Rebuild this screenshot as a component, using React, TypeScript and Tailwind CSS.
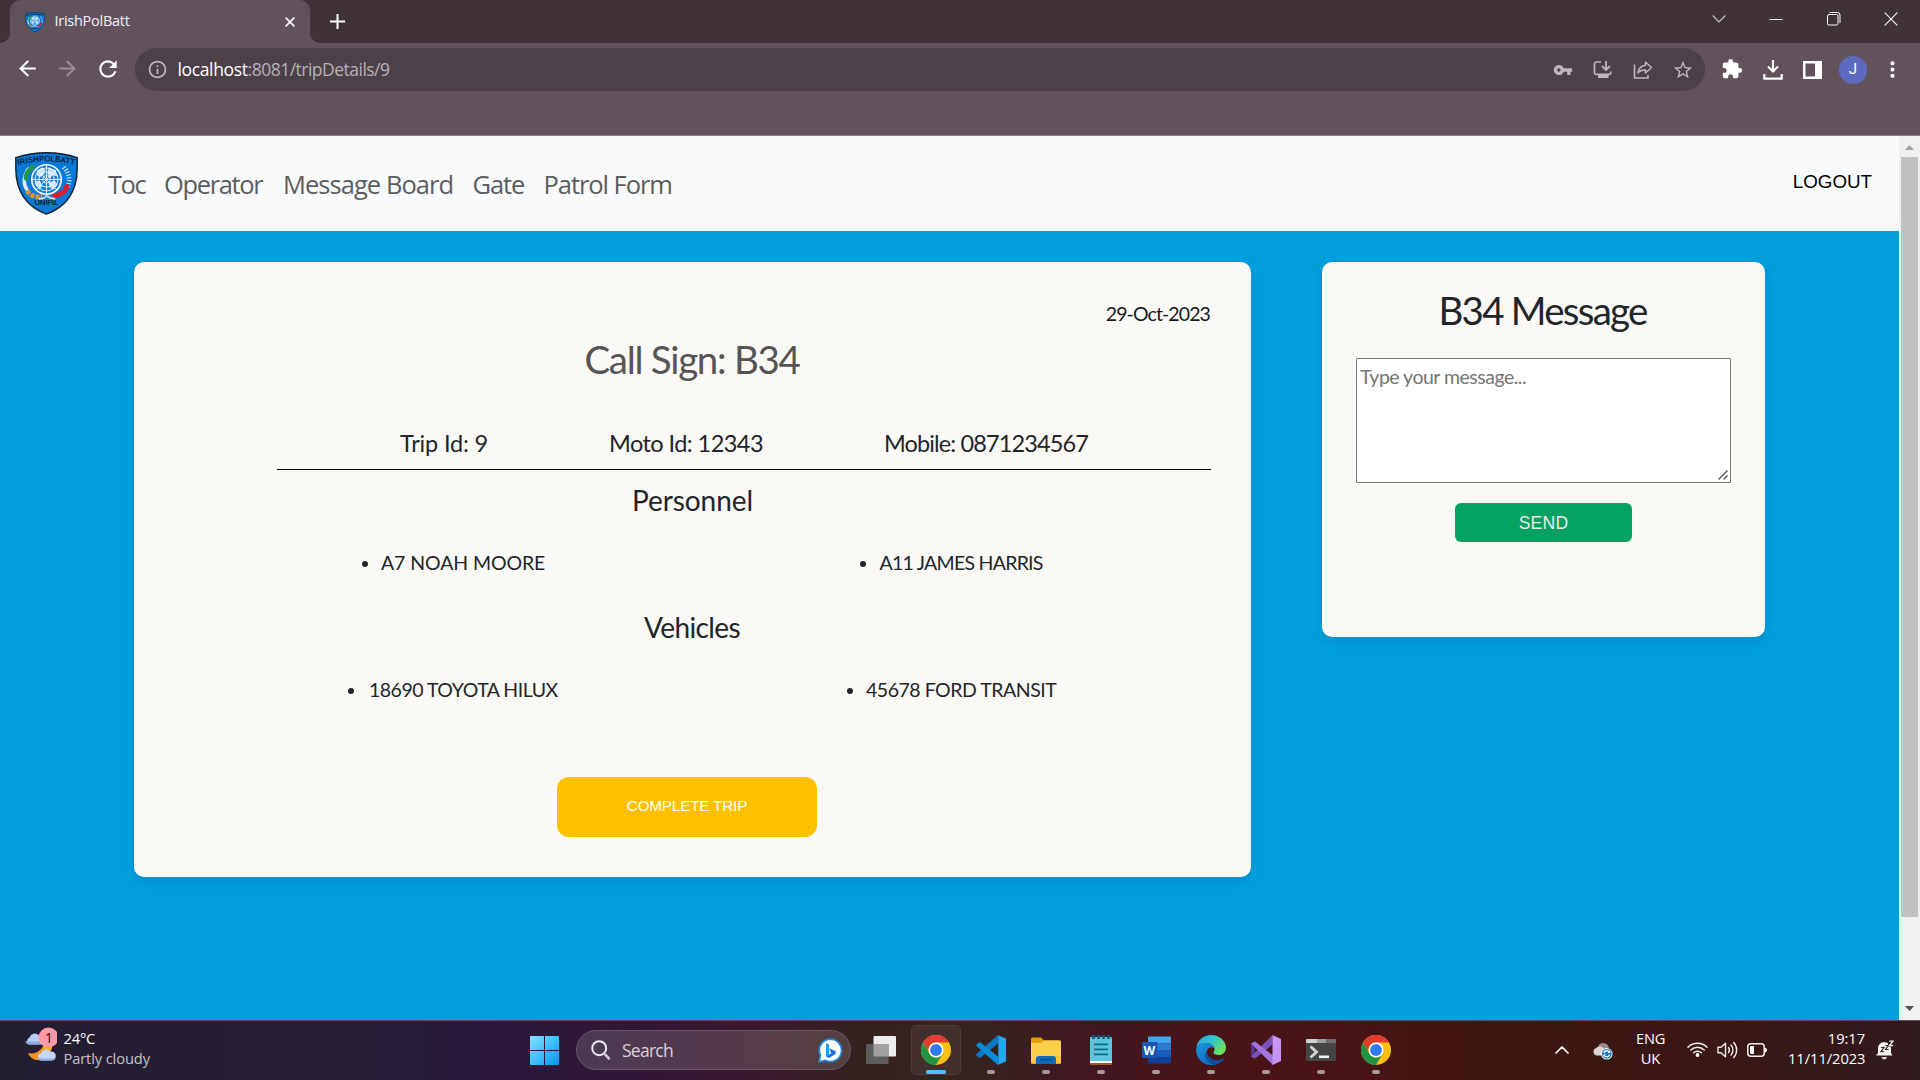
import React from "react";
import {
  MdArrowBack,
  MdArrowForward,
  MdExtension,
  MdMoreVert,
  MdOutlineInfo,
  MdRefresh,
  MdStarOutline,
  MdVpnKey,
} from "react-icons/md";

function Shield({ size, id }: { size: number; id: string }) {
  return (
    <svg width={size} height={size} viewBox="0 0 62 62">
      <path
        d="M.8 5.5Q15 .8 31 .8T61.2 5.5V16C61.2 40 50 54 31 61.2 12 54 .8 40 .8 16Z"
        fill="#0a78d6"
        stroke="#15202c"
        strokeWidth="1.4"
      />
      <g fill="none" strokeLinecap="round">
        <path d="M13 17c-5 8-5 15-1 20" stroke="#dfeefa" strokeWidth="3.6" strokeDasharray="3 1.4" />
        <path d="M17 15c-5 4-7 7-6 11" stroke="#1b9a4b" strokeWidth="4.600" />
        <path d="M48 15c6 7 6 14 4 19" stroke="#dfeefa" strokeWidth="4.600" strokeDasharray="1 1.800" strokeLinecap="butt" />
        <path d="M12 38c3 5 8 7 15 6" stroke="#e3942d" strokeWidth="4.600" strokeDasharray="4 1.200" strokeLinecap="butt" />
        <path d="M51 34c-1 5-6 8-12 9" stroke="#d3222f" strokeWidth="5" />
        <path d="M24 46q5 0 7-3 3 3 8 3" stroke="#c9d8e4" strokeWidth="1.800" />
      </g>
      <circle cx="31" cy="27" r="14.500" fill="#1180da" stroke="#f4faff" strokeWidth="1.600" />
      <g fill="none" stroke="#e9f5ff" strokeWidth=".9">
        <circle cx="31" cy="27" r="11.300" />
        <circle cx="31" cy="27" r="7.500" />
        <circle cx="31" cy="27" r="3.800" />
        <path d="M31 12v30M16 27h30M20.500 16.500l21 21M41.500 16.500l-21 21" />
      </g>
      <path
        d="M22 18l5-3 3 3-2 5-4 2-3-3zM33 15l7 3 2 6-5-1-3 3-2-5zM20 28l5 1 2 5-3 3-4-5zM33 30l6-2 3 4-4 5-4-2z"
        fill="#f4faff"
        opacity=".8"
      />
      <defs>
        <path id={id} d="M3 12.800Q31 5.500 59 12.800" />
      </defs>
      <text fontFamily="Liberation Sans" fontSize="7.600" fill="#0c1420" stroke="#0c1420" strokeWidth=".2" textLength="56">
        <textPath href={`#${id}`} textLength="56">
          IRISHPOLBATT
        </textPath>
      </text>
      <text x="31" y="52.500" textAnchor="middle" fontFamily="Liberation Sans" fontSize="7.400" fill="#0c1420" stroke="#0c1420" strokeWidth=".2">
        UNIFIL
      </text>
    </svg>
  );
}

function ChromeLogo() {
  return (
    <svg width="30" height="30" viewBox="0 0 30 30">
      <circle cx="15" cy="15" r="15" fill="#fbc116" />
      <path d="M15 7.500H28A15 15 0 0 0 2 7.500L8.500 18.750A7.500 7.500 0 0 1 15 7.500Z" fill="#e33b2e" />
      <path d="M2 7.500A15 15 0 0 0 15 30L21.500 18.750A7.500 7.500 0 0 1 8.500 18.750Z" fill="#229342" />
      <circle cx="15" cy="15" r="7.500" fill="#fff" />
      <circle cx="15" cy="15" r="5.900" fill="#2f7bee" />
    </svg>
  );
}

function VsCodeLogo() {
  return (
    <svg width="30" height="30" viewBox="0 0 30 30">
      <path d="M22 0v8.500L4.500 22.500a1.500 1.500 0 0 1-1.800 0L.7 20.700a1.300 1.300 0 0 1 0-1.900Z" fill="#0a79c4" />
      <path d="M22 30v-8.500L4.500 7.500a1.500 1.500 0 0 0-1.800 0L.7 9.300a1.300 1.300 0 0 0 0 1.900Z" fill="#0b8ad8" />
      <path d="M21.500 0 30 3.600v22.800L21.500 30c.6-.3.8-.8.800-1.500v-27c0-.7-.2-1.200-.8-1.500Z" fill="#27a5f1" />
    </svg>
  );
}

function FolderLogo() {
  return (
    <svg width="30" height="30" viewBox="0 0 30 30">
      <path d="M0 4a1.500 1.500 0 0 1 1.500-1.500h8.500l3 3V12H0Z" fill="#e3a008" />
      <path d="M0 8h9.500l4-2.700H28.500A1.500 1.500 0 0 1 30 6.800V27.500a1.300 1.300 0 0 1-1.300 1.300H1.300A1.300 1.300 0 0 1 0 27.500Z" fill="#fecf4b" />
      <path d="M0 26v1.500a1.300 1.300 0 0 0 1.300 1.300h27.400a1.300 1.300 0 0 0 1.300-1.300V20Z" fill="#fbbf24" opacity=".6" />
      <path d="M5 29v-5a3 3 0 0 1 3-3h14a3 3 0 0 1 3 3v5Z" fill="#0f6cbd" />
      <path d="M9 24.700h12" stroke="#0b4a86" strokeWidth="1.500" />
    </svg>
  );
}

function NotepadLogo() {
  return (
    <svg width="30" height="30" viewBox="0 0 30 30">
      <path d="M4 26h22v3.500a.8.800 0 0 1-.8.800H4.800a.8.800 0 0 1-.8-.8Z" fill="#a4561b" />
      <path d="M4 24h22v4H4Z" fill="#f3f3f3" />
      <path d="M4 3a1 1 0 0 1 1-1h20a1 1 0 0 1 1 1v23H4Z" fill="#5cc5de" />
      <path d="M8 9.300h14M8 14.300h14M8 19.300h14" stroke="#0b6a8c" strokeWidth="1.800" />
      <path d="M7.500 0v4M12.500 0v4M17.500 0v4M22.500 0v4" stroke="#0e5f7e" strokeWidth="2.600" />
    </svg>
  );
}

function WordLogo() {
  return (
    <svg width="30" height="30" viewBox="0 0 30 30">
      <path d="M8 1.500h21a1 1 0 0 1 1 1V8.500H7V2.500a1 1 0 0 1 1-1Z" fill="#41a5ee" />
      <path d="M7 8.500h23V15H7Z" fill="#2b7cd3" />
      <path d="M7 15h23v7H7Z" fill="#185abd" />
      <path d="M7 22h23v5.500a1 1 0 0 1-1 1H8a1 1 0 0 1-1-1Z" fill="#103f91" />
      <rect x="1" y="7" width="15.500" height="16" rx="1.200" fill="#1a56b4" />
      <text x="8.400" y="19.500" textAnchor="middle" fontFamily="Open Sans" fontWeight="700" fontSize="12" fill="#fff">
        W
      </text>
    </svg>
  );
}

function EdgeLogo() {
  return (
    <svg width="30" height="30" viewBox="0 0 30 30">
      <defs>
        <linearGradient id="edgeTop" x1="0" y1="0" x2="1" y2=".6">
          <stop offset="0" stopColor="#2aa9e8" />
          <stop offset=".5" stopColor="#2fc4cf" />
          <stop offset="1" stopColor="#6ae35a" />
        </linearGradient>
        <linearGradient id="edgeLow" x1="0" y1="0" x2="1" y2="1">
          <stop offset="0" stopColor="#1a9be0" />
          <stop offset="1" stopColor="#0c55b0" />
        </linearGradient>
      </defs>
      <path d="M.3 12.500C1.500 5 7.600 0 15 0c8.500 0 15 6 15 12.700 0 4.500-3.500 7.300-7.300 7.300-3.200 0-5.200-1.100-5.200-2.400 0-.8 1-1.400 1-3.300C18.500 11 14.500 8 10 8 5 8 1 10.500.3 12.500Z" fill="url(#edgeTop)" />
      <path d="M.2 13.500C1 10 5 8 10 8c4.500 0 8.500 3 8.500 6.300-.2-2.500-5.800-3.300-7.300.7C9.500 21 14 26.500 21 25.700c2.500-.2 4.500-1.500 6-2.300.6-.3 1 .2.600.8C25 28 20 30 15 30 6.500 30-.8 22.500.2 13.500Z" fill="url(#edgeLow)" />
      <path d="M10.500 15.500c-3.500 5 .5 13 8 14 3.500-.5 7-2.500 9-5.300.4-.6 0-1.100-.6-.8-7 4.200-15.500.6-16.400-7.900Z" fill="#0d4f9e" />
    </svg>
  );
}

function VisualStudioLogo() {
  return (
    <svg width="30" height="30" viewBox="0 0 30 30">
      <path d="M0 8.500 4 6.500V23.500L0 21.500Z" fill="#52338a" />
      <path d="M0 21.500 21.500 0v9.500L4 23.500Z" fill="#7a52b8" />
      <path d="M0 8.500 4 6.500 22 20.500V30Z" fill="#a174e0" />
      <path d="M21.500 0 30 4v22l-8.500 4Z" fill="#c795f7" />
    </svg>
  );
}

function TerminalLogo() {
  return (
    <svg width="30" height="30" viewBox="0 0 30 30">
      <rect x="0" y="4" width="30" height="22" rx="1.200" fill="#454545" />
      <path d="M1 4h10v4H0V5a1 1 0 0 1 1-1Z" fill="#d0d0d0" />
      <path d="M11 4h9v4h-9Z" fill="#9d9d9d" />
      <path d="M20 4h9a1 1 0 0 1 1 1v3H20Z" fill="#6e6e6e" />
      <path d="m4.500 11.500 6 5.500-6 5.500" fill="none" stroke="#d4d4d4" strokeWidth="2.800" />
      <path d="M13 21.800h10" stroke="#f2f2f2" strokeWidth="2.600" />
    </svg>
  );
}

function StartLogo() {
  return (
    <svg width="29" height="29" viewBox="0 0 29 29">
      <defs>
        <linearGradient id="win" x1="0" y1="0" x2="1" y2="1">
          <stop offset="0" stopColor="#86dfff" />
          <stop offset=".5" stopColor="#3fc0fb" />
          <stop offset="1" stopColor="#0a93f2" />
        </linearGradient>
      </defs>
      <path d="M1 0h13v14H0V1a1 1 0 0 1 1-1ZM15 0h13a1 1 0 0 1 1 1v13H15ZM0 15h14v14H1a1 1 0 0 1-1-1ZM15 15h14v13a1 1 0 0 1-1 1H15Z" fill="url(#win)" />
    </svg>
  );
}

function BingLogo() {
  return (
    <svg width="25" height="25" viewBox="0 0 25 25">
      <path d="M12.500 1.200A11.200 11.200 0 1 1 7.500 22.500L1.200 23.800 2.300 17A11.200 11.200 0 0 1 12.500 1.200Z" fill="#fff" stroke="#2388e0" strokeWidth="1.700" />
      <path d="M8 5.200l3 1.300v10.300l-3 2Z" fill="#1c9ee8" />
      <path d="M11 10.200l6 2.600q1.800 1.200.4 3.200L11 20l-3-1.700 5.300-3.100Z" fill="#1f6fe0" />
    </svg>
  );
}

function TaskViewLogo() {
  return (
    <svg width="30" height="28" viewBox="0 0 30 28">
      <rect x="7.500" y="0" width="22.500" height="20.500" rx="1" fill="#ececec" />
      <rect x="0" y="8" width="22.500" height="20" rx="1" fill="#5f5d5c" />
      <rect x="7.500" y="8" width="15" height="12.500" fill="#a3a1a0" />
    </svg>
  );
}

function WeatherIcon() {
  return (
    <svg className="mb-[10px]" width="32" height="36" viewBox="0 0 32 36">
      <path d="M27 14c1 6-1 14-8 17.500C12 36 5 31 3 26c8 2 15-3 17-12Z" fill="#f29422" />
      <path d="M27 14c.5 3 .3 6-1 9l-8-1 3-8Z" fill="#f6b21f" />
      <path d="M4 17.500a4 4 0 0 1 .5-7 5.500 5.500 0 0 1 9.500-2c3 0 4 9 0 9Z" fill="#b9cdf6" />
      <path d="M4 17.500a4 4 0 0 1-3.500-3.500q8 1 18 0v3.500Z" fill="#8ea9e6" />
      <path d="M16 33.500a3.800 3.800 0 0 1 .5-7.500 5 5 0 0 1 9-1.500 4.500 4.500 0 0 1 1.500 9Z" fill="#c5d6f8" />
      <path d="M16 33.500a3.800 3.800 0 0 1-3.300-2.500q8 1 18 0a4 4 0 0 1-3.700 2.500Z" fill="#8fb0e8" />
      <circle cx="23.500" cy="10.500" r="10" fill="#ff99a4" />
      <text x="24" y="16" textAnchor="middle" fontFamily="Open Sans" fontSize="14.500" fill="#2b1b22">
        1
      </text>
    </svg>
  );
}

const taskbarApps = [
  { name: "code", icon: <VsCodeLogo /> },
  { name: "files", icon: <FolderLogo /> },
  { name: "notepad", icon: <NotepadLogo /> },
  { name: "word", icon: <WordLogo /> },
  { name: "edge", icon: <EdgeLogo /> },
  { name: "studio", icon: <VisualStudioLogo /> },
  { name: "terminal", icon: <TerminalLogo /> },
  { name: "chrome", icon: <ChromeLogo /> },
];

function TitleBar() {
  return (
    <div className="flex h-[43px] shrink-0 bg-[#3f3339]">
      <svg width="10" height="43" viewBox="0 0 10 43">
        <path d="M10 33A10 10 0 0 1 0 43H10Z" fill="#62525c" />
      </svg>
      <div className="flex h-full w-[300px] items-center rounded-t-[10px] bg-[#62525c] pl-[15px] pr-[15px]">
        <Shield size={20} id="arcSmall" />
        <span className="ml-[9.500px] pb-[1px] text-[14.5px] leading-5 tracking-[-0.27px] whitespace-nowrap text-[#f3f0f2]">IrishPolBatt</span>
        <svg className="ml-auto" width="10" height="10" viewBox="0 0 10 10">
          <path d="M.6.6l8.800 8.800M9.400.6.6 9.400" stroke="#f5f2f4" strokeWidth="1.800" />
        </svg>
      </div>
      <svg width="10" height="43" viewBox="0 0 10 43">
        <path d="M0 33A10 10 0 0 0 10 43H0Z" fill="#62525c" />
      </svg>
      <svg className="mt-[14px] ml-[10px]" width="15" height="15" viewBox="0 0 15 15">
        <path d="M7.500 0v15M0 7.500h15" stroke="#fff" strokeWidth="2" />
      </svg>
      <div className="ml-auto flex h-[37px] items-center pr-[22px]">
        <svg width="14" height="14" viewBox="0 0 14 14">
          <path d="M.7 3.500 7 10l6.300-6.500" fill="none" stroke="#cfc8cc" strokeWidth="1.100" />
        </svg>
        <svg className="ml-[43px]" width="14" height="14" viewBox="0 0 14 14">
          <path d="M.5 7.500h13" stroke="#fff" strokeWidth="1" />
        </svg>
        <svg className="ml-[44px]" width="14" height="14" viewBox="0 0 14 14">
          <rect x=".5" y="2.500" width="10.500" height="10.500" rx="1.500" fill="none" stroke="#fff" />
          <path d="M2.500.5H10.500a2.500 2.500 0 0 1 2.500 2.500V11" fill="none" stroke="#fff" />
        </svg>
        <svg className="ml-[43px]" width="14" height="14" viewBox="0 0 14 14">
          <path d="M.7.7l12.600 12.600M13.300.7.7 13.300" stroke="#fff" strokeWidth="1.100" />
        </svg>
      </div>
    </div>
  );
}

function Toolbar() {
  return (
    <div className="h-[93px] shrink-0 border-b border-[#8a7f87] bg-[#62525c] pt-[5px]">
      <div className="flex h-[43px] items-center">
        <MdArrowBack size={25} className="mb-[2px] ml-[15px] text-white" />
        <MdArrowForward size={25} className="mb-[2px] ml-[15px] text-[#9a8e95]" />
        <MdRefresh size={26} className="mb-[2px] ml-[15px] text-white" />
        <div className="ml-[14px] flex h-[43px] w-[1570px] items-center rounded-full bg-[#4c4149] text-[#bdb6ba]">
          <MdOutlineInfo size={21} className="ml-[12px]" />
          <div className="mb-[2px] ml-[9.500px] flex text-[17.5px] leading-6 whitespace-nowrap">
            <span className="tracking-[-0.36px] text-white">localhost</span>
            <span className="tracking-[-0.51px] text-[#b9b1b6]">:8081/tripDetails/9</span>
          </div>
          <div className="ml-auto flex items-center pr-[11px]">
            <MdVpnKey size={20} />
            <svg className="ml-[20px]" width="20" height="20" viewBox="0 0 20 20">
              <path d="M8 2H3.200A1.700 1.700 0 0 0 1.500 3.700v9a1.700 1.700 0 0 0 1.700 1.700H16a1.700 1.700 0 0 0 1.700-1.700V11.500" fill="none" stroke="currentColor" strokeWidth="1.700" />
              <path d="M5 14.500h10.500v3.500H5Z" fill="currentColor" />
              <path d="M13 1v8M9 6l4 4 4-4" fill="none" stroke="currentColor" strokeWidth="1.800" />
            </svg>
            <svg className="ml-[20px]" width="20" height="20" viewBox="0 0 20 20">
              <path d="M1.500 4.500v13.500h13.500v-3" fill="none" stroke="currentColor" strokeWidth="1.600" />
              <path d="M12.500 2l6 5.500-6 5.500V10q-5-.2-7.500 3 .8-7 7.500-7.800Z" fill="none" stroke="currentColor" strokeWidth="1.500" strokeLinejoin="round" />
            </svg>
            <MdStarOutline size={22} className="ml-[19px]" />
          </div>
        </div>
        <MdExtension size={22} className="mb-[2px] ml-[16px] text-white" />
        <svg className="ml-[20px]" width="20" height="20" viewBox="0 0 20 20">
          <path d="M10 0v11M5 6.500l5 5 5-5" fill="none" stroke="#fff" strokeWidth="2.200" />
          <path d="M1.300 14v4.600h17.400V14" fill="none" stroke="#fff" strokeWidth="2.200" />
        </svg>
        <svg className="ml-[20px]" width="19" height="18" viewBox="0 0 19 18">
          <path d="M0 0h19v18H0ZM2.500 2.500v13H12v-13Z" fill="#fff" fillRule="evenodd" />
        </svg>
        <span className="ml-[17px] flex size-7 items-center justify-center rounded-full bg-[#5c6bc0] font-['Roboto'] text-[15px] text-white">J</span>
        <MdMoreVert size={25} className="ml-[13px] text-white" />
      </div>
    </div>
  );
}

function NavBar() {
  return (
    <nav className="flex h-[95px] shrink-0 items-start bg-[#f8fafc] text-[25.5px] leading-9 whitespace-nowrap text-[#5c5d5e]">
      <div className="mt-[16px] ml-[15px] w-[93px] shrink-0">
        <Shield size={63} id="arcLarge" />
      </div>
      <div className="mt-[30px] flex w-full">
        <a className="w-[56px] tracking-[-1.500px]">Toc</a>
        <a className="w-[119px] tracking-[-1.350px]">Operator</a>
        <a className="w-[189.5px] tracking-[-0.950px]">Message Board</a>
        <a className="w-[71px] tracking-[-1.100px]">Gate</a>
        <a className="tracking-[-1.050px]">Patrol Form</a>
        <a className="mr-[27px] ml-auto -mt-[2px] font-['Liberation_Sans'] text-[18.8px] tracking-[-0.020px] text-black">LOGOUT</a>
      </div>
    </nav>
  );
}

function Bullet() {
  return <span className="mt-[3px] size-[6px] shrink-0 rounded-full bg-[#212529]" />;
}

function TripCard() {
  return (
    <section className="h-[615px] w-[1117px] rounded-[10px] bg-[#faf9f6] pt-[36px] whitespace-nowrap text-[#212529] shadow-[0_4px_8px_rgba(0,0,0,0.1)]">
      <div className="flex h-[31px] items-center justify-end pr-[41px] text-[19.5px] tracking-[-0.900px] text-[#16191c]">29-Oct-2023</div>
      <h1 className="flex h-[60px] items-center justify-center pt-[2px] pr-[1px] text-[38.5px] tracking-[-1.300px] text-[#555]">Call Sign: B34</h1>
      <div className="mt-[32px] mr-[40px] ml-[143px] flex h-[49px] border-b border-black text-[23.5px] leading-[45px]">
        <span className="ml-[123px] w-[209px] tracking-[-0.150px]">Trip Id: 9</span>
        <span className="w-[275px] tracking-[-0.550px]">Moto Id: 12343</span>
        <span className="tracking-[-0.870px]">Mobile: 0871234567</span>
      </div>
      <h2 className="flex h-[60px] items-center justify-center text-[28px] tracking-[-0.060px]">Personnel</h2>
      <ul className="grid h-[65px] grid-cols-[498px_auto] items-center pl-[228px] text-[19.5px]">
        <li className="flex items-center gap-[13px] tracking-[-0.100px]">
          <Bullet />
          A7 NOAH MOORE
        </li>
        <li className="flex items-center gap-[13.5px] tracking-[-0.740px]">
          <Bullet />
          A11 JAMES HARRIS
        </li>
      </ul>
      <h2 className="flex h-[64px] items-center justify-center pr-[1px] text-[28px] tracking-[-0.620px]">Vehicles</h2>
      <ul className="grid h-[61px] grid-cols-[499px_auto] items-center pl-[214px] text-[19.5px]">
        <li className="flex items-center gap-[15px] tracking-[-0.500px]">
          <Bullet />
          18690 TOYOTA HILUX
        </li>
        <li className="flex items-center gap-[13px] tracking-[-0.480px]">
          <Bullet />
          45678 FORD TRANSIT
        </li>
      </ul>
      <button className="mt-[57px] ml-[423px] flex h-[60px] w-[260px] items-center justify-center rounded-[12px] bg-[#ffc000] pb-[2px] font-['Liberation_Sans'] text-[15.2px] tracking-[-0.140px] text-white">
        COMPLETE TRIP
      </button>
    </section>
  );
}

function MessageCard() {
  return (
    <section className="ml-[71px] flex h-[375px] w-[443px] flex-col items-center rounded-[10px] bg-[#faf9f6] pt-[19px] whitespace-nowrap text-[#212529] shadow-[0_4px_8px_rgba(0,0,0,0.1)]">
      <h1 className="flex h-[58px] items-center pt-[2px] pr-[2px] text-[38.5px] tracking-[-1.750px]">B34 Message</h1>
      <div className="mt-[19px] flex h-[125px] w-[375px] justify-between rounded-[1px] border border-[#767676] bg-white">
        <span className="mt-[1.5px] ml-[3px] text-[19.5px] leading-8 tracking-[-0.500px] text-[#757575]">Type your message...</span>
        <svg className="mt-auto mr-[2px] mb-[2px]" width="10" height="10" viewBox="0 0 10 10">
          <path d="M.5 9.500l9-9M5.500 9.500l4-4" stroke="#4a4a4a" strokeWidth="1.200" />
        </svg>
      </div>
      <button className="mt-[20px] flex h-[39px] w-[177px] items-center justify-center rounded-[6px] bg-[#04a162] pt-[2px] font-['Liberation_Sans'] text-[17.6px] tracking-[0.200px] text-[#ece9e4]">
        SEND
      </button>
    </section>
  );
}

function ScrollBar() {
  return (
    <div className="flex w-[21px] shrink-0 flex-col items-center bg-[#f1f1f1]">
      <svg width="21" height="21" viewBox="0 0 21 21">
        <path d="M6 14l4.500-5L15 14Z" fill="#a3a3a3" />
      </svg>
      <div className="h-[760px] w-[17px] bg-[#c1c1c1]" />
      <svg className="mt-auto" width="21" height="21" viewBox="0 0 21 21">
        <path d="M6 7l4.500 5L15 7Z" fill="#505050" />
      </svg>
    </div>
  );
}

function Taskbar() {
  return (
    <div className="flex h-[60px] shrink-0 items-center border-t border-[#5a4f55] bg-[linear-gradient(90deg,#241e31_0%,#261e36_21%,#2a193c_25%,#321735_34%,#3a182f_39%,#35221f_45%,#35231f_51%,#421722_57%,#481418_63%,#491316_69%,#401610_78%,#3b1713_86%,#35191a_95%,#2f1a1e_100%)] pb-px whitespace-nowrap">
      <div className="flex w-[530px] items-center pl-[25px]">
        <WeatherIcon />
        <div className="mb-[4px] ml-[6.5px] text-[14.7px] leading-5">
          <div className="tracking-[-0.200px] text-white">24°C</div>
          <div className="tracking-[-0.130px] text-[#c4c1c8]">Partly cloudy</div>
        </div>
      </div>
      <StartLogo />
      <div className="ml-[17px] flex h-[40px] w-[275px] items-center rounded-full border border-[#6b5765] bg-[linear-gradient(90deg,#4b3a54,#543a4d_50%,#54403f)] pr-[7px] pl-[14px]">
        <svg width="19" height="20" viewBox="0 0 19 20">
          <circle cx="8.200" cy="8.200" r="7" fill="none" stroke="#eeeaf0" strokeWidth="2" />
          <path d="M13 13.300l5 5.200" stroke="#cfc8d0" strokeWidth="2.600" strokeLinecap="round" />
        </svg>
        <span className="ml-[12px] text-[17.5px] leading-6 tracking-[-0.740px] text-[#d9d2d8]">Search</span>
        <span className="ml-auto">
          <BingLogo />
        </span>
      </div>
      <span className="ml-[15px]">
        <TaskViewLogo />
      </span>
      <div className="ml-[15px] flex h-[50px] w-[50px] flex-col items-center rounded-[5px] border border-[#4b3a38] bg-[#402f2d] pt-[9px]">
        <ChromeLogo />
        <span className="mt-[5px] h-[4px] w-[20px] rounded-full bg-[#4cc2ff]" />
      </div>
      <div className="ml-[2.500px] flex">
        {taskbarApps.map((app) => (
          <div key={app.name} className="flex h-[50px] w-[55px] flex-col items-center pt-[10px]">
            {app.icon}
            <span className="mt-[5px] h-[4px] w-[8px] rounded-full bg-[#a8999b]" />
          </div>
        ))}
      </div>
      <div className="ml-auto flex items-center pr-[26px] text-[14.7px] leading-5 text-white">
        <svg width="14" height="8" viewBox="0 0 14 8">
          <path d="M1 7l6-6 6 6" fill="none" stroke="#fff" strokeWidth="1.700" strokeLinecap="round" strokeLinejoin="round" />
        </svg>
        <svg className="mt-[2px] ml-[23px]" width="21" height="18" viewBox="0 0 21 18">
          <path d="M6 4a6 6 0 0 1 11 2l-8 6Z" fill="#9a8a8a" />
          <path d="M4 13.500a4 4 0 0 1 0-7.500 5 5 0 0 1 8 1l3 6.500Z" fill="#dcd4d4" />
          <circle cx="14.800" cy="11.800" r="5.800" fill="#fff" />
          <circle cx="14.800" cy="11.800" r="4.900" fill="#1878c8" />
          <path d="M12 11a3 3 0 0 1 5.500-.8M17.600 12.600a3 3 0 0 1-5.500.8" fill="none" stroke="#fff" strokeWidth="1.300" />
          <path d="M18.200 8.500v2.500h-2.500ZM11.400 15v-2.500h2.500Z" fill="#fff" />
        </svg>
        <div className="mb-[4px] ml-[23px] w-[29px] text-center tracking-[-0.200px]">
          <div>ENG</div>
          <div>UK</div>
        </div>
        <svg className="mt-[-2px] ml-[22px]" width="21" height="16" viewBox="0 0 21 16">
          <g fill="none" stroke="#f0ecec" strokeWidth="1.500" strokeLinecap="round">
            <path d="M1 6.200a13.400 13.400 0 0 1 19 0M3.800 9a9.500 9.500 0 0 1 13.400 0M6.600 11.800a5.500 5.500 0 0 1 7.800 0" />
          </g>
          <circle cx="10.500" cy="14" r="1.900" fill="#fff" />
        </svg>
        <svg className="ml-[9px]" width="21" height="18" viewBox="0 0 21 18">
          <g fill="none" stroke="#f0ecec" strokeWidth="1.400" strokeLinecap="round" strokeLinejoin="round">
            <path d="M1 6.200h3L8.500 2.200v13.600L4 11.800H1Z" />
            <path d="M11.500 6.500a4 4 0 0 1 0 5M14 4a7.500 7.500 0 0 1 0 10M16.700 1.500a11 11 0 0 1 0 15" />
          </g>
        </svg>
        <svg className="ml-[9px]" width="21" height="14" viewBox="0 0 21 14">
          <rect x=".8" y=".8" width="16.400" height="12.400" rx="3" fill="none" stroke="#f0ecec" strokeWidth="1.500" />
          <rect x="3" y="3" width="4" height="8" rx="1" fill="#fff" />
          <path d="M18 4.500q2 .5 2 2.500t-2 2.500Z" fill="#fff" />
        </svg>
        <div className="mb-[4px] ml-[20px] w-[77px] text-right tracking-[-0.050px]">
          <div>19:17</div>
          <div>11/11/2023</div>
        </div>
        <svg className="ml-[11px]" width="18" height="20" viewBox="0 0 18 20">
          <path d="M2 8.500a6 6 0 0 1 7-6.300q5 .4 6 6V13l1.500 2.500H0L2 13Z" fill="#f3f0f0" />
          <path d="M5.500 17h5.500q-.5 2.500-2.700 2.500T5.500 17Z" fill="#d8d2d2" />
          <path d="M5 7.500h3l-3 4h3" fill="none" stroke="#2f1a1e" strokeWidth="1.100" />
          <path d="M9.500 5.500h3l-3 4h3" fill="none" stroke="#2f1a1e" strokeWidth="1.100" />
          <path d="M12 0h6v6.500h-6Z" fill="#2f1a1e" />
          <path d="M13.200 1.200H17l-3.600 4.300H17" fill="none" stroke="#f3f0f0" strokeWidth="1.300" />
        </svg>
      </div>
    </div>
  );
}

export default function App() {
  return (
    <div className="flex h-[1080px] w-[1920px] flex-col overflow-hidden font-['Open_Sans',sans-serif]">
      <TitleBar />
      <Toolbar />
      <div className="flex h-[884px] shrink-0">
        <div className="flex w-[1899px] flex-col bg-[#009edd]">
          <NavBar />
          <main className="flex items-start pt-[31px] pl-[134px] font-['Lato',sans-serif]">
            <TripCard />
            <MessageCard />
          </main>
        </div>
        <ScrollBar />
      </div>
      <Taskbar />
    </div>
  );
}
